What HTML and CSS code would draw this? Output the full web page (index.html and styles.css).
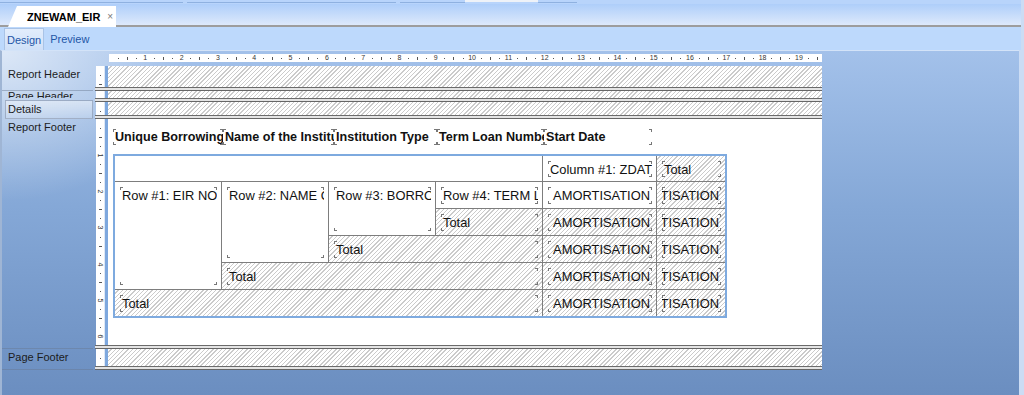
FILE: index.html
```html
<!DOCTYPE html>
<html lang="en">
<head>
  <meta charset="UTF-8" />
  <title>ZNEWAM_EIR - Report Designer</title>
  <link rel="stylesheet" href="styles.css">
</head>
<body>
  <div class="window">
    <div class="topstrip">
      <span class="seg" style="width:183px"></span>
      <span class="seg gap" style="width:209px"></span>
      <span class="seg gap" style="width:65px"></span>
      <span class="seg box" style="width:73px"></span>
      <span class="seg" style="width:39px"></span>
    </div>

    <div class="tabbar">
      <div class="doc-tab">
        <span class="doc-title">ZNEWAM_EIR</span>
        <span class="doc-close">×</span>
      </div>
    </div>

    <div class="viewbar">
      <span class="view-tab active">Design</span>
      <span class="view-tab">Preview</span>
    </div>

    <div class="designer">
      <div class="ruler-row">
        <div class="hruler" id="hruler" data-marks="78"></div>
      </div>

      <!-- Report Header -->
      <div class="section s-rh">
        <div class="sec-label">Report Header</div>
        <div class="sec-body">
          <div class="sec-main">
            <div class="vruler" data-marks="2"></div>
            <div class="edge"></div>
            <div class="band hatch"></div>
          </div>
          <div class="sep"></div>
        </div>
      </div>

      <!-- Page Header -->
      <div class="section s-ph">
        <div class="sec-label ph">Page Header</div>
        <div class="sec-body">
          <div class="sec-main">
            <div class="vruler" data-marks="0"></div>
            <div class="edge"></div>
            <div class="band hatch"></div>
          </div>
          <div class="sep"></div>
        </div>
      </div>

      <!-- Details -->
      <div class="section s-det">
        <div class="sec-label current">Details</div>
        <div class="sec-body">
          <div class="sec-main">
            <div class="vruler" data-marks="1"></div>
            <div class="edge"></div>
            <div class="band hatch"></div>
          </div>
          <div class="sep"></div>
        </div>
      </div>

      <!-- Report Footer -->
      <div class="section s-rf">
        <div class="sec-label">Report Footer</div>
        <div class="sec-body">
          <div class="sec-main">
            <div class="vruler" data-marks="24"></div>
            <div class="edge"></div>
            <div class="band rf">
              <div class="heads">
                <div class="head mk w1">Unique Borrowing</div>
                <div class="head mk w2">Name of the Institution</div>
                <div class="head mk w3">Institution Type</div>
                <div class="head mk w4">Term Loan Number</div>
                <div class="head mk w5">Start Date</div>
              </div>

              <div class="xtab">
                <div class="cell c4"></div>
                <div class="cell"><div class="fld mk">Column #1: ZDATE</div></div>
                <div class="cell hatch"><div class="fld mk">Total</div></div>

                <div class="cell r4"><div class="fld mk">Row #1: EIR NO</div></div>
                <div class="cell r3"><div class="fld mk">Row #2: NAME OF</div></div>
                <div class="cell r2"><div class="fld mk">Row #3: BORROWER</div></div>
                <div class="cell"><div class="fld mk">Row #4: TERM LOAN</div></div>
                <div class="cell"><div class="fld mk right">AMORTISATION</div></div>
                <div class="cell hatch"><div class="fld mk right">AMORTISATION</div></div>

                <div class="cell hatch"><div class="fld mk">Total</div></div>
                <div class="cell hatch"><div class="fld mk right">AMORTISATION</div></div>
                <div class="cell hatch"><div class="fld mk right">AMORTISATION</div></div>

                <div class="cell hatch c2"><div class="fld mk">Total</div></div>
                <div class="cell hatch"><div class="fld mk right">AMORTISATION</div></div>
                <div class="cell hatch"><div class="fld mk right">AMORTISATION</div></div>

                <div class="cell hatch c3"><div class="fld mk">Total</div></div>
                <div class="cell hatch"><div class="fld mk right">AMORTISATION</div></div>
                <div class="cell hatch"><div class="fld mk right">AMORTISATION</div></div>

                <div class="cell hatch c4"><div class="fld mk">Total</div></div>
                <div class="cell hatch"><div class="fld mk right">AMORTISATION</div></div>
                <div class="cell hatch"><div class="fld mk right">AMORTISATION</div></div>
              </div>
            </div>
          </div>
          <div class="sep"></div>
        </div>
      </div>

      <!-- Page Footer -->
      <div class="section s-pf">
        <div class="sec-label">Page Footer</div>
        <div class="sec-body">
          <div class="sec-main">
            <div class="vruler" data-marks="1"></div>
            <div class="edge"></div>
            <div class="band hatch"></div>
          </div>
          <div class="sep"></div>
        </div>
      </div>
    </div>
  </div>

  <script>
    // Reglas: una marca cada cuarto de centímetro
    function buildRuler(el) {
      const total = parseInt(el.dataset.marks, 10);
      for (let i = 1; i <= total; i++) {
        const m = document.createElement('span');
        if (i % 4 === 0) {
          m.className = 'mark num';
          m.textContent = i / 4;
        } else if (i % 2 === 0) {
          m.className = 'mark tick';
        } else {
          m.className = 'mark dot';
        }
        el.appendChild(m);
      }
    }

    buildRuler(document.getElementById('hruler'));
    document.querySelectorAll('.vruler').forEach(buildRuler);
  </script>
</body>
</html>
```

FILE: styles.css
```css
body {
  margin: 0;
  width: 1024px;
  height: 395px;
  overflow: hidden;
  font-family: "Liberation Sans", Arial, sans-serif;
  background: #cbdcf4;
}

.window {
  width: 1021px;
  height: 395px;
  display: flex;
  flex-direction: column;
}

/* franja superior */
.topstrip {
  height: 4px;
  flex: none;
  display: flex;
  background: #b8d4fb;
}

.seg {
  height: 1px;
  margin-top: 2px;
  background: #8fb1e0;
}

.seg.gap {
  margin-left: 4px;
}

.seg.box {
  height: 2px;
  margin-top: 0;
  background: #eef2f8;
}

/* pestañas de documento */
.tabbar {
  height: 21px;
  flex: none;
  border-bottom: 2px solid #9d9d9d;
  background: linear-gradient(#aecefa, #dde9fb);
  padding-left: 8px;
  display: flex;
  align-items: flex-end;
}

.doc-tab {
  width: 108px;
  height: 21px;
  margin-bottom: -2px;
  box-sizing: border-box;
  padding-left: 19px;
  background: #fff;
  clip-path: polygon(0 100%, 9px 0, 100% 0, 100% 100%);
  display: flex;
  align-items: center;
}

.doc-title {
  font-size: 11px;
  font-weight: bold;
  color: #000;
}

.doc-close {
  font-size: 10px;
  color: #777;
  margin-left: 7px;
}

/* Design / Preview */
.viewbar {
  height: 23px;
  flex: none;
  background: #bdd9fc;
  display: flex;
  padding-left: 4px;
}

.view-tab {
  font-size: 11px;
  color: #1f56a6;
  padding: 0 3px;
  display: flex;
  align-items: center;
}

.view-tab.active {
  padding: 0 2px;
  margin-top: 1px;
  border: 1px solid #a9c3e6;
  border-bottom: none;
  background: linear-gradient(#e2edfc, #cfe0f8);
}

.view-tab + .view-tab {
  margin-left: 3px;
}

/* área del diseñador */
.designer {
  flex: 1;
  margin-right: 2px;
  border-left: 2px solid #9fb5d4;
  border-top: 1px solid #d3e3f8;
  background:
    radial-gradient(ellipse 190px 150px at 0 0, rgba(255, 255, 255, 0.62), rgba(255, 255, 255, 0)),
    linear-gradient(#a3c1ea, #85a8d7 45%, #6b8ec0);
}

.ruler-row {
  display: flex;
  height: 12px;
  padding-top: 3px;
}

.hruler {
  margin-left: 107px;
  width: 713px;
  height: 8px;
  box-sizing: border-box;
  padding-left: 4.54px;
  background: #fff;
  display: flex;
  align-items: center;
  overflow: hidden;
}

.mark {
  flex: none;
  width: 9.08px;
  display: flex;
  justify-content: center;
  align-items: center;
  font-size: 7px;
  line-height: 8px;
  color: #333;
}

.mark.dot::before,
.mark.tick::before {
  content: "";
  width: 1px;
  height: 1px;
  background: #555;
}

.hruler .mark.tick::before {
  height: 3px;
}

/* secciones */
.section {
  display: flex;
}

.s-rh { height: 25px; }
.s-ph { height: 11px; }
.s-det { height: 17px; }
.s-rf { height: 230px; }
.s-pf { height: 21px; }

.sec-label {
  width: 91px;
  box-sizing: border-box;
  padding: 2px 0 0 6px;
  font-size: 11px;
  line-height: 13px;
  color: #1c1c1c;
  white-space: nowrap;
  overflow: hidden;
  border-bottom: 1px solid rgba(105, 120, 145, 0.45);
}

.sec-label.ph {
  align-self: flex-start;
  height: 7px;
  padding-top: 0;
  line-height: 10px;
  border-bottom: none;
}

.sec-label.current {
  margin: -2px 0 0 3px;
  width: 88px;
  padding-left: 2px;
  border: 1px solid rgba(120, 135, 160, 0.55);
  background: linear-gradient(rgba(255, 255, 255, 0.45), rgba(255, 255, 255, 0.15));
}

.sec-body {
  margin-left: 3px;
  display: flex;
  flex-direction: column;
}

.sec-main {
  flex: 1;
  display: flex;
  min-height: 0;
}

.vruler {
  width: 8px;
  box-sizing: border-box;
  padding-top: 4.54px;
  background: #fff;
  display: flex;
  flex-direction: column;
  overflow: hidden;
}

.vruler .mark {
  width: 8px;
  height: 9.08px;
}

.vruler .mark.tick::before {
  width: 3px;
}

.vruler .mark.num {
  transform: rotate(90deg);
}

.edge {
  width: 4px;
  background: linear-gradient(90deg, #dfe8f5 1px, #7ea8de 1px);
}

.band {
  width: 714px;
  background: #fff;
}

.hatch {
  background: repeating-linear-gradient(135deg, #fff 0, #fff 2px, #cbcbcb 2px, #cbcbcb 3px);
}

.sep {
  height: 4px;
  flex: none;
  margin-left: -1px;
  box-sizing: border-box;
  border-top: 1px solid #6b6b6b;
  border-bottom: 1px solid #666;
  background: #e4e4e4;
}

/* pie del reporte */
.rf {
  box-sizing: border-box;
  padding: 10px 0 0 5px;
}

.heads {
  display: flex;
  height: 16px;
}

.head {
  position: relative;
  box-sizing: border-box;
  padding-left: 2px;
  font-size: 12.6px;
  font-weight: bold;
  line-height: 16px;
  color: #111;
  white-space: nowrap;
  overflow: hidden;
}

.w1 { width: 110px; }
.w2 { width: 111px; }
.w3 { width: 103px; }
.w4 { width: 107px; }
.w5 { width: 108px; }

.mk::before {
  content: "";
  position: absolute;
  inset: 0;
  pointer-events: none;
  background:
    linear-gradient(#777, #777) 0 0 / 1px 3px no-repeat,
    linear-gradient(#777, #777) 0 0 / 3px 1px no-repeat,
    linear-gradient(#777, #777) 100% 0 / 1px 3px no-repeat,
    linear-gradient(#777, #777) 100% 0 / 3px 1px no-repeat,
    linear-gradient(#777, #777) 0 100% / 1px 3px no-repeat,
    linear-gradient(#777, #777) 0 100% / 3px 1px no-repeat,
    linear-gradient(#777, #777) 100% 100% / 1px 3px no-repeat,
    linear-gradient(#777, #777) 100% 100% / 3px 1px no-repeat;
}

.xtab {
  margin-top: 9px;
  width: 614px;
  height: 164px;
  box-sizing: border-box;
  border: 2px solid #7eaadf;
  background: #7d7d7d;
  display: grid;
  grid-template-columns: 106px 106px 106px 106px 113px 68px;
  grid-template-rows: 25px 26px 26px 26px 26px 26px;
  gap: 1px;
}

.cell {
  display: flex;
  min-width: 0;
  padding: 5px 4px 4px 5px;
  background: #fff;
}

.cell.hatch {
  background: repeating-linear-gradient(135deg, #fff 0, #fff 2px, #cbcbcb 2px, #cbcbcb 3px);
}

.c2 { grid-column: span 2; }
.c3 { grid-column: span 3; }
.c4 { grid-column: span 4; }
.r2 { grid-row: span 2; }
.r3 { grid-row: span 3; }
.r4 { grid-row: span 4; }

.fld {
  position: relative;
  flex: 1;
  min-width: 0;
  padding: 1px 2px;
  font-size: 12.9px;
  line-height: 15px;
  color: #111;
  white-space: nowrap;
  overflow: hidden;
}

.fld.right {
  display: flex;
  justify-content: flex-end;
}
```
